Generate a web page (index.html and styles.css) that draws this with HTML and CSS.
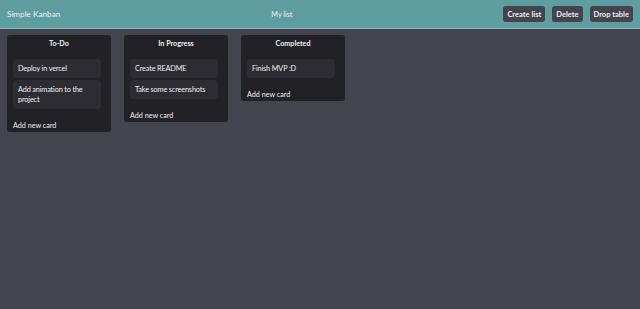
FILE: index.html
```html
<!DOCTYPE html>
<html lang="en">
<head>
    <meta charset="UTF-8">
    <meta name="viewport" content="width=device-width, initial-scale=1.0">
    <title>Simple Kanban</title>
    <link rel="stylesheet" href="styles.css">
</head>
<body>

    <div class="header">
        <span class="brand">Simple Kanban</span>
        <span class="table-name">My list</span>
        <div class="actions">
            <button>Create list</button>
            <button>Delete</button>
            <button>Drop table</button>
        </div>
    </div>

    <div class="board">
        <div class="list">
            <h2>To-Do</h2>
            <div class="cards">
                <div class="card">Deploy in vercel</div>
                <div class="card">Add animation to the project</div>
            </div>
            <div class="add-card">Add new card</div>
        </div>

        <div class="list">
            <h2>In Progress</h2>
            <div class="cards">
                <div class="card">Create README</div>
                <div class="card">Take some screenshots</div>
            </div>
            <div class="add-card">Add new card</div>
        </div>

        <div class="list">
            <h2>Completed</h2>
            <div class="cards">
                <div class="card">Finish MVP :D</div>
            </div>
            <div class="add-card">Add new card</div>
        </div>
    </div>

</body>
</html>
```

FILE: styles.css
```css
body {
    font-family: 'Lato', sans-serif;
    font-size: 7.2px;
    margin: 0;
    background: #44444e; /* Slate gray */
    color: #eeeeee;
    height: 100vh;
}

.header {
    display: flex;
    justify-content: space-between;
    align-items: center;
    height: 28px;
    padding: 0 7px;
    background: #5f9ea0; /* Cadet blue */
    border-bottom: 1px solid #8fb8b9;
}

.brand {
    font-size: 8.2px;
}

.table-name {
    font-size: 7.2px;
}

.actions {
    display: flex;
    gap: 7px;
}

.actions button {
    font-family: inherit;
    font-size: 7.5px;
    font-weight: bold;
    color: #eeeeee;
    background: #45444e;
    border: none;
    border-radius: 3px;
    height: 16px;
    padding: 0 4px;
    cursor: pointer;
}

.board {
    display: flex;
    align-items: flex-start;
    gap: 13px;
    padding: 6px 7px;
}

.list {
    width: 104px;
    box-sizing: border-box;
    background: #222126;
    border-radius: 3px;
    padding: 4px 10px 1px 6px;
}

.list h2 {
    font-size: 7.2px;
    font-weight: bold;
    text-align: center;
    line-height: 10px;
    margin: 0 0 10px 4px;
}

.cards {
    display: flex;
    flex-direction: column;
    gap: 2px;
}

.card {
    font-size: 7.3px;
    letter-spacing: -0.15px;
    background: #2d2c32;
    border-radius: 4px;
    padding: 4.5px 4px 4.5px 5px;
    line-height: 10px;
}

.add-card {
    margin-top: 12px;
    line-height: 10px;
}
```
